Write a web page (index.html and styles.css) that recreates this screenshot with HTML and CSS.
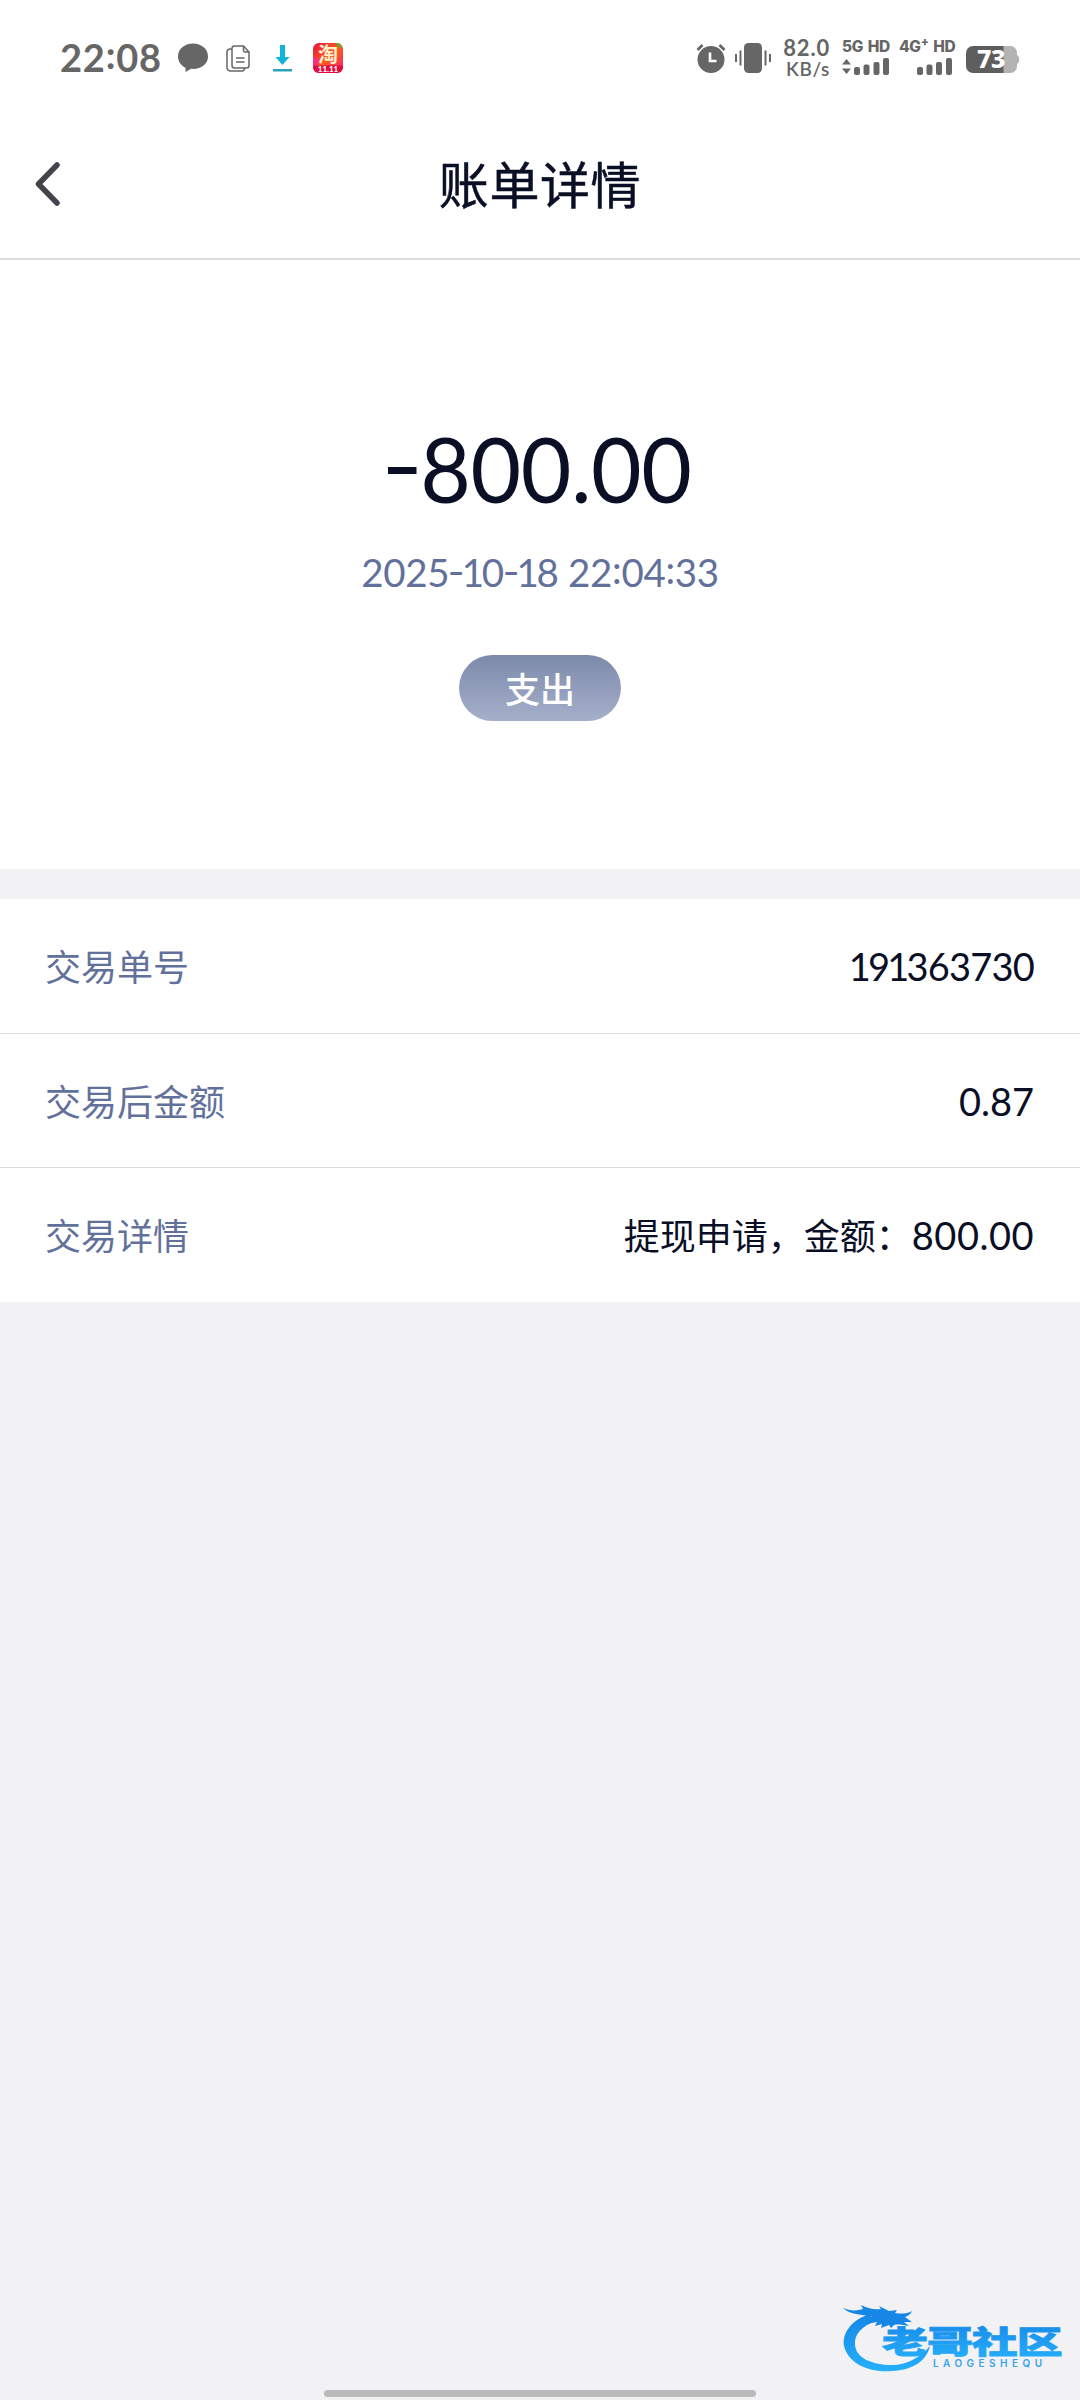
FILE: index.html
```html
<!DOCTYPE html>
<html lang="zh-CN">
<head>
<meta charset="utf-8">
<title>账单详情</title>
<link rel="stylesheet" href="styles.css">
</head>
<body>
<div class="screen">
  <div class="status-bar">
    <div class="status-left">
      <span class="clock">22<span class="colon">:</span>08</span>
      <svg class="ic-chat" width="30" height="30" viewBox="0 0 30 30"><path d="M15 .5C6.500.5 0 6 0 13.500c0 5 3 9.200 7.500 11.300V29l5.500-3.200c10 .9 17-4.800 17-12.300C30 6 23.500.5 15 .5z" fill="#666"/></svg>
      <svg class="ic-copy" width="24" height="27" viewBox="0 0 24 27" fill="none" stroke="#666" stroke-width="1.500"><path d="M8.500 1h9l5.500 6v13.500a2.500 2.500 0 0 1-2.500 2.500h-12A2.500 2.500 0 0 1 6 20.500v-17A2.500 2.500 0 0 1 8.500 1zM17.500 1v4.500A1.500 1.500 0 0 0 19 7h4M6 4H4a3 3 0 0 0-3 3v15.500A3.500 3.500 0 0 0 4.500 26H16a2.500 2.500 0 0 0 2.500-3M10 13h8.500M10 17h8.500"/></svg>
      <svg class="ic-down" width="19" height="27" viewBox="0 0 19 27"><path d="M7 0h5v12h4.500l-7 8-7-8H7z" fill="#10b4d8"/><path d="M0 24h19v2.500H0z" fill="#2aa4bd"/></svg>
      <svg class="ic-tao" width="30" height="30" viewBox="0 0 30 30">
        <defs><linearGradient id="tao" x1="0" y1="0" x2="1" y2="1"><stop offset="0" stop-color="#e5103c"/><stop offset=".5" stop-color="#ff5a1c"/><stop offset="1" stop-color="#f0207c"/></linearGradient></defs>
        <rect width="30" height="30" rx="6" fill="url(#tao)"/>
        <path d="M0 13l6 4-2 5.500H0z" fill="#f2308c"/>
        <path d="M0 22.500h30V24a6 6 0 0 1-6 6H6a6 6 0 0 1-6-6z" fill="#e5093f"/>
        <path d="M23 1c1 2 3 4 6 4C28 1 26 0 23 0z" fill="#58b030"/>
        <text class="tao-char" x="15" y="19" text-anchor="middle">淘</text>
        <text class="tao-date" x="15" y="29" text-anchor="middle">11.11</text>
      </svg>
    </div>
    <div class="status-right">
      <svg class="ic-alarm" width="30" height="30" viewBox="0 0 30 30"><circle cx="15" cy="16.500" r="13.500" fill="#666"/><path d="M1.500 7l5-5M28.500 7l-5-5" stroke="#666" stroke-width="2.800"/><path d="M14 9.500V18h6.500" fill="none" stroke="#fff" stroke-width="2.600"/></svg>
      <svg class="ic-vib" width="36" height="30" viewBox="0 0 36 30"><rect x="9" width="18" height="30" rx="4.500" fill="#666"/><path d="M5.500 7.500v15M1 11v8M30.500 7.500v15M35 11v8" stroke="#666" stroke-width="2"/></svg>
      <div class="speed"><span class="speed-num">82.0</span><span class="speed-unit">KB/s</span></div>
      <div class="sim sim-a"><span class="sim-label">5G HD</span>
        <svg width="47" height="17" viewBox="0 0 47 17" fill="#666"><path d="M0 6.500L4.500 1 9 6.500zM0 10.500L4.500 16 9 10.500z"/><rect x="12" y="9" width="6" height="8" rx="2"/><rect x="21.500" y="6.500" width="6" height="10.500" rx="2"/><rect x="31.500" y="4" width="6" height="13" rx="2"/><rect x="41" y="0" width="6" height="17" rx="2"/></svg>
      </div>
      <div class="sim sim-b"><span class="sim-label">4G<sup class="plus">+</sup> HD</span>
        <svg width="35" height="17" viewBox="0 0 35 17" fill="#666"><rect x="0" y="9" width="6" height="8" rx="2"/><rect x="9.500" y="6.500" width="6" height="10.500" rx="2"/><rect x="19" y="4" width="6" height="13" rx="2"/><rect x="29" y="0" width="6" height="17" rx="2"/></svg>
      </div>
      <svg class="ic-batt" width="54" height="27" viewBox="0 0 54 27"><path d="M37 0h7.500a6.500 6.500 0 0 1 6.500 6.500V9c3 1 3 8 0 9v2.500a6.500 6.500 0 0 1-6.500 6.500H37z" fill="#b3b3b3"/><path d="M37.500 0H7a7 7 0 0 0-7 7v13a7 7 0 0 0 7 7h30.500z" fill="#5e5e5e"/><text class="batt-num" x="25" y="22" text-anchor="middle">73</text></svg>
    </div>
  </div>
  <div class="nav-bar">
    <svg class="back" width="26" height="44" viewBox="0 0 26 44"><path d="M22 3L3.500 22 22 41" fill="none" stroke="#44434c" stroke-width="5.500" stroke-linecap="round" stroke-linejoin="round"/></svg>
    <h1 class="title">账单详情</h1>
  </div>
  <div class="summary">
    <div class="amount"><span class="minus"></span>800.00</div>
    <div class="date">2025<span class="hy">-</span><span class="one">1</span>0<span class="hy">-</span><span class="one">1</span>8 22<span class="colon">:</span>04<span class="colon">:</span>33</div>
    <div class="badge">支出</div>
  </div>
  <div class="details">
    <div class="row"><span class="label">交易单号</span><span class="value"><span class="one">1</span>9<span class="one">1</span>363730</span></div>
    <div class="row"><span class="label">交易后金额</span><span class="value">0.87</span></div>
    <div class="row"><span class="label">交易详情</span><span class="value"><span class="cjk">提现申请，金额：</span>800.00</span></div>
  </div>
  <svg class="watermark" width="230" height="76" viewBox="0 0 230 76">
    <defs>
      <linearGradient id="wg" x1="0" y1="0" x2="0" y2="1"><stop offset="0" stop-color="#1686e6"/><stop offset="1" stop-color="#25b0fb"/></linearGradient>
    </defs>
    <path d="M27 10C8 17 0 30 2 42c4 17 24 27 48 25 20-1 34-9 38-25-10 12-24 19-38 19C30 61 14 54 13 41c-1-11 7-19 21-24z" fill="url(#wg)"/>
    <path d="M1 4c7 3 14 3 20 1l-2-4c8 4 14 5 20 4l-2-3 10 5 8-1-2 3c6 1 12 1 17-2-1 3-4 5-7 6l7 5h-8l5 4c-6-1-11-2-15-1l-3 3-2-3-8 3 1-4-7 2 2-4-11 2 6-8C15 11 6 9 1 4z" fill="#1686e6"/>
    <text class="wm-name" transform="translate(40 49) scale(1.480 1)" x="0" y="0" textLength="122" fill="url(#wg)" stroke="url(#wg)">老哥社区</text>
    <text class="wm-latin" x="91" y="62.500" textLength="109">LAOGESHEQU</text>
  </svg>
  <div class="home-bar"></div>
</div>
</body>
</html>
```
FILE: styles.css
```css
body {
  margin: 0;
  background: #f2f2f4;
  font-family: Lato, "Noto Sans CJK SC", sans-serif;
  color: #0a0f26;
}
.screen {
  position: relative;
  width: 1080px;
  height: 2400px;
  overflow: hidden;
  background: #f2f2f4;
}
.status-bar {
  display: flex;
  justify-content: space-between;
  height: 116px;
  padding: 0 60px 0 60px;
  box-sizing: border-box;
  background: #fff;
  color: #666;
}
.status-bar svg { overflow: visible; }
.status-left, .status-right { display: flex; align-items: flex-start; }
.clock { width: 102px; margin-top: 33px; font-size: 38px; line-height: 48px; font-weight: 700; white-space: nowrap; letter-spacing: .8px; }
.colon { position: relative; top: -3px; }
.ic-chat { margin: 43px 0 0 16px; }
.ic-copy { margin: 45px 0 0 18px; }
.ic-down { margin: 45px 0 0 23px; }
.ic-tao { margin: 43px 0 0 21px; }
.tao-char { font: 700 20px "Noto Sans CJK SC", sans-serif; fill: #fff0cf; }
.tao-date { font: 900 8px Lato, sans-serif; fill: #fff; }
.ic-alarm { margin-top: 43px; }
.ic-vib { margin: 43px 0 0 9px; }
.speed { display: flex; flex-direction: column; align-items: flex-end; width: 48px; margin: 38px 0 0 11px; }
.speed-num { font-size: 22px; line-height: 20px; font-weight: 700; letter-spacing: .8px; }
.speed-unit { font-size: 19px; line-height: 21px; font-weight: 600; letter-spacing: .6px; }
.sim { display: flex; flex-direction: column; align-items: flex-start; }
.sim svg { margin-top: 3px; }
.sim-a { width: 48px; margin: 38px 0 0 12px; }
.sim-b { width: 57px; margin: 38px 0 0 9px; }
.sim-b svg { margin-left: 18px; }
.sim-label { height: 17px; font: 800 15.500px/18px Inter, sans-serif; white-space: nowrap; letter-spacing: -.3px; word-spacing: 1.500px; }
.plus { font-size: 12px; line-height: 0; }
.ic-batt { margin: 46px 0 0 10px; }
.batt-num { font: 800 25px "Noto Sans", sans-serif; fill: #fff; letter-spacing: -.5px; }
.nav-bar {
  display: grid;
  grid-template-columns: 60px 1fr 60px;
  align-items: center;
  height: 144px;
  padding: 0 34px;
  box-sizing: border-box;
  border-bottom: 2px solid #dcdcde;
  background: #fff;
}
.back { margin: 0 0 6px 1px; }
.title { margin: 0 0 10px; text-align: center; font: 400 50px/72px "Noto Sans CJK SC", sans-serif; letter-spacing: .6px; -webkit-text-stroke: .5px #0a0f26; }
.summary {
  display: flex;
  flex-direction: column;
  align-items: center;
  height: 609px;
  padding-top: 154px;
  box-sizing: border-box;
  background: #fff;
}
.amount { display: flex; align-items: center; height: 108px; font-size: 92px; line-height: 108px; letter-spacing: -.5px; transform: scaleX(.950); }
.minus { width: 30px; height: 7px; margin: 4px 4px 0 0; background: #0a0f26; }
.date { margin-top: 26px; font-size: 38.500px; line-height: 48px; color: #62719b; white-space: nowrap; letter-spacing: -.3px; }
.hy { display: inline-block; transform: translateY(-2px) scaleX(1.200); }
.one { margin: 0 -2px; }
.date .one { margin: 0 -2px 0 -1.500px; }
.badge {
  width: 162px;
  height: 66px;
  margin-top: 59px;
  border-radius: 33px;
  background: linear-gradient(#7c8aab, #a5afca);
  color: #fff;
  text-align: center;
  font: 500 35px/66px "Noto Sans CJK SC", sans-serif;
}
.details { margin-top: 30px; background: #fff; }
.row {
  display: flex;
  justify-content: space-between;
  align-items: center;
  height: 134px;
  padding: 0 46px 0 45px;
  box-sizing: border-box;
  border-bottom: 1px solid #d9dadc;
}
.row:first-child { height: 135px; }
.row:last-child { border-bottom: 0; }
.label { margin-bottom: 2px; font: 400 36px/52px "Noto Sans CJK SC", sans-serif; color: #62719b; }
.value { font-size: 38px; line-height: 52px; }
.row:first-child .value { letter-spacing: -.8px; }
.row:last-child .value { letter-spacing: .5px; }
.row .cjk { font-size: 36px; letter-spacing: 0; }
.watermark { position: absolute; left: 842px; top: 2304px; }
.wm-name { font: 900 31px "Noto Sans CJK SC", sans-serif; stroke-width: .8px; }
.wm-latin { font: 600 10px Inter, sans-serif; fill: #36a3ef; }
.home-bar { position: absolute; left: 324px; top: 2390px; width: 432px; height: 7px; border-radius: 4px; background: #bababb; }
```
